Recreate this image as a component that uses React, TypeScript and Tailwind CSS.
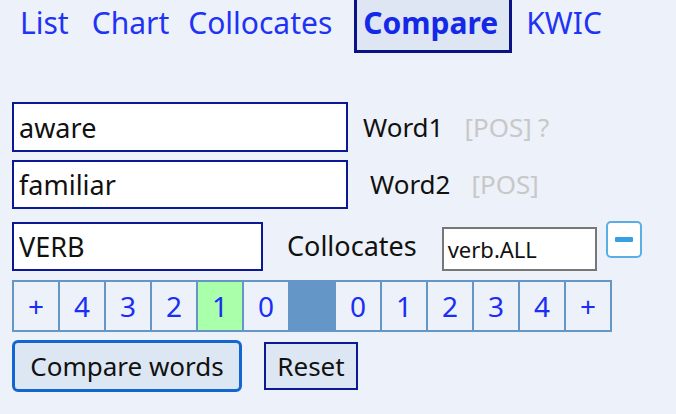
import React from 'react'

const tabs = [
    { label: 'List', ml: 'ml-0' },
    { label: 'Chart', ml: 'ml-[5px]' },
    { label: 'Collocates', ml: 'ml-[1px]' },
    { label: 'Compare', ml: 'ml-[13px]' },
    { label: 'KWIC', ml: 'ml-[5px]' },
]
const leftCells = ['+', '4', '3', '2', '1', '0']
const rightCells = ['0', '1', '2', '3', '4', '+']

const Cell = ({ label, active }: { label: string; active?: boolean }) => (
    <div
        className={`flex items-center justify-center h-[48px] text-[28px] text-[#1a2ef5] ${
            active ? 'bg-[#aaffaa]' : 'bg-[#edf1f9]'
        }`}
    >
        {label}
    </div>
)

export default function App() {
    return (
        <div
            className="w-full h-[414px] overflow-hidden bg-[#edf1f9] text-[#111]"
            style={{ fontFamily: '"Noto Sans", "Open Sans", sans-serif' }}
        >
            {/* Tabs */}
            <div className="flex flex-row items-start pl-[11px] -mt-[7px]">
                {tabs.map((tab) => (
                    <div
                        key={tab.label}
                        className={`${tab.ml} border-[3px] pl-[6px] pt-[6px] pb-[7px] text-[30px] leading-[41px] ${
                            tab.label === 'Compare'
                                ? 'pr-[11px] border-[#0b1284] bg-[#dde6f2] font-bold text-[#1428e8]'
                                : 'pr-[6px] border-transparent text-[#1f33f5]'
                        }`}
                    >
                        {tab.label}
                    </div>
                ))}
            </div>

            <div className="flex flex-col pl-[12px] mt-[49px]">
                {/* Word 1 */}
                <div className="flex flex-row items-center h-[50px]">
                    <input
                        readOnly
                        value="aware"
                        className="w-[336px] h-[50px] border-2 border-[#0b1a94] bg-white px-[5px] text-[27px] outline-none"
                    />
                    <span className="ml-[15px] text-[26px]">Word1</span>
                    <span className="ml-[21px] text-[26px] text-[#c8c8c8]">[POS]</span>
                    <span className="ml-[6px] text-[26px] text-[#c8c8c8]">?</span>
                </div>

                {/* Word 2 */}
                <div className="flex flex-row items-center h-[49px] mt-[8px]">
                    <input
                        readOnly
                        value="familiar"
                        className="w-[336px] h-[49px] border-2 border-[#0b1a94] bg-white px-[5px] text-[27px] outline-none"
                    />
                    <span className="ml-[22px] text-[26px]">Word2</span>
                    <span className="ml-[21px] text-[26px] text-[#c8c8c8]">[POS]</span>
                </div>

                {/* Collocates */}
                <div className="flex flex-row items-start mt-[13px]">
                    <input
                        readOnly
                        value="VERB"
                        className="w-[251px] h-[49px] border-2 border-[#0b1a94] bg-white px-[5px] text-[27px] outline-none"
                    />
                    <span className="ml-[24px] mt-[5px] text-[27px] leading-[37px]">Collocates</span>
                    <div className="ml-[25px] mt-[5px] w-[155px] h-[44px] border-2 border-[#777] bg-white flex items-center px-[4px] text-[22px]">
                        verb.ALL
                    </div>
                    <button className="ml-[9px] -mt-[1px] w-[36px] h-[37px] rounded-[5px] border-2 border-[#5aaee6] bg-white flex items-center justify-center">
                        <span className="block w-[18px] h-[5px] rounded-[1px] bg-[#3a9ee0]" />
                    </button>
                </div>

                {/* Positions */}
                <div className="grid grid-cols-13 gap-[2px] p-[2px] bg-[#6496c8] w-[600px] mt-[9px]">
                    {leftCells.map((c, i) => (
                        <Cell key={'l' + i} label={c} active={i === 4} />
                    ))}
                    <div className="h-[48px] bg-[#6496c8]" />
                    {rightCells.map((c, i) => (
                        <Cell key={'r' + i} label={c} />
                    ))}
                </div>

                {/* Buttons */}
                <div className="flex flex-row items-center mt-[8px]">
                    <button className="w-[230px] h-[52px] rounded-[6px] border-[3px] border-[#1565d0] bg-[#dde7f3] text-[26px]">
                        Compare words
                    </button>
                    <button className="ml-[22px] w-[94px] h-[48px] border-2 border-[#0b1a94] bg-[#dde7f3] text-[26px]">
                        Reset
                    </button>
                </div>
            </div>
        </div>
    )
}
